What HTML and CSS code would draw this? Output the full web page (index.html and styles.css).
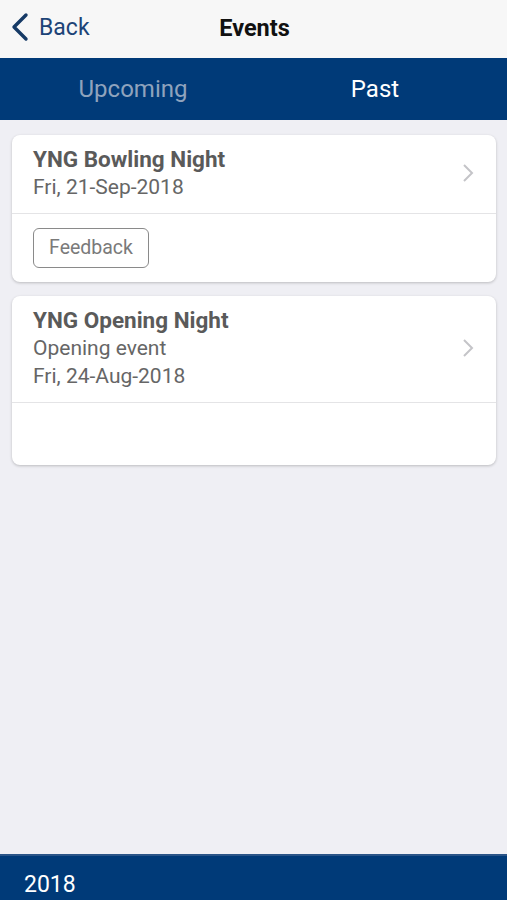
FILE: index.html
```html
<!DOCTYPE html>
<html lang="en">
<head>
    <meta charset="UTF-8">
    <meta name="viewport" content="width=device-width, initial-scale=1.0">
    <title>Events</title>
    <link rel="stylesheet" href="styles.css">
</head>
<body>
    <div class="app">
        <!-- Navigation bar -->
        <header class="navbar">
            <a class="back" href="#">
                <svg class="back-icon" width="18" height="30" viewBox="0 0 18 30">
                    <path d="M15 3 L3 15 L15 27" fill="none" stroke="#163a66" stroke-width="3.4" stroke-linecap="round" stroke-linejoin="round"/>
                </svg>
                Back
            </a>
            <h1 class="title">Events</h1>
        </header>

        <!-- Tabs -->
        <nav class="tabs">
            <div class="tab">Upcoming</div>
            <div class="tab active">Past</div>
        </nav>

        <main class="list">
            <div class="card">
                <div class="card-main">
                    <div class="card-text">
                        <div class="event-name">YNG Bowling Night</div>
                        <div class="event-line">Fri, 21-Sep-2018</div>
                    </div>
                    <svg class="chevron" width="12" height="20" viewBox="0 0 12 20">
                        <path d="M2 2 L10 10 L2 18" fill="none" stroke="#c4c4c8" stroke-width="2"/>
                    </svg>
                </div>
                <div class="card-actions">
                    <button class="feedback">Feedback</button>
                </div>
            </div>

            <div class="card">
                <div class="card-main">
                    <div class="card-text">
                        <div class="event-name">YNG Opening Night</div>
                        <div class="event-line">Opening event</div>
                        <div class="event-line">Fri, 24-Aug-2018</div>
                    </div>
                    <svg class="chevron" width="12" height="20" viewBox="0 0 12 20">
                        <path d="M2 2 L10 10 L2 18" fill="none" stroke="#c4c4c8" stroke-width="2"/>
                    </svg>
                </div>
                <div class="card-actions empty"></div>
            </div>
        </main>

        <footer class="footer">2018</footer>
    </div>
</body>
</html>
```

FILE: styles.css
```css
* {
    box-sizing: border-box;
}

body {
    margin: 0;
    background-color: #efeff4;
    font-family: Roboto, "Liberation Sans", Arial, sans-serif;
}

.app {
    height: 900px;
    display: flex;
    flex-direction: column;
}

.navbar {
    height: 58px;
    background-color: #f7f7f7;
    position: relative;
    display: flex;
    align-items: center;
    justify-content: center;
}

.back {
    position: absolute;
    left: 11px;
    top: 12px;
    display: flex;
    align-items: center;
    gap: 10px;
    color: #1d4477;
    text-decoration: none;
    font-size: 23px;
}

.title {
    margin: 0 0 2px 2px;
    font-size: 23.5px;
    font-weight: bold;
    color: #111;
}

.tabs {
    height: 62px;
    background-color: #003a78;
    display: flex;
    padding: 0 11px 0 12px;
}

.tab {
    flex: 1;
    display: flex;
    align-items: center;
    justify-content: center;
    font-size: 24px;
    color: #8fa3bd;
}

.tab.active {
    color: #fff;
}

.list {
    flex: 1;
    padding: 15px 11px 0 12px;
}

.card {
    background: #fff;
    border-radius: 8px;
    box-shadow: 0 1px 3px rgba(0, 0, 0, 0.22);
    margin-bottom: 14px;
}

.card-main {
    display: flex;
    align-items: center;
    padding: 10px 22px 11px 21px;
    border-bottom: 1px solid #e4e4e6;
}

.card-text {
    flex: 1;
}

.event-name {
    font-size: 22.5px;
    font-weight: bold;
    color: #5a5a5a;
    line-height: 28px;
}

.event-line {
    font-size: 21px;
    color: #666;
    line-height: 28.5px;
}

.card-actions {
    padding: 14px 21px 14px 21px;
}

.card-actions.empty {
    height: 62px;
}

.feedback {
    font-family: inherit;
    font-size: 19.5px;
    color: #7a7a7a;
    background: #fff;
    border: 1px solid #8a8a8a;
    border-radius: 6px;
    height: 40px;
    width: 116px;
    padding: 0;
}

.footer {
    height: 46px;
    background-color: #003a78;
    color: #fff;
    font-size: 23px;
    padding: 15px 0 0 24px;
    border-top: 2px solid #2a5487;
}
```
